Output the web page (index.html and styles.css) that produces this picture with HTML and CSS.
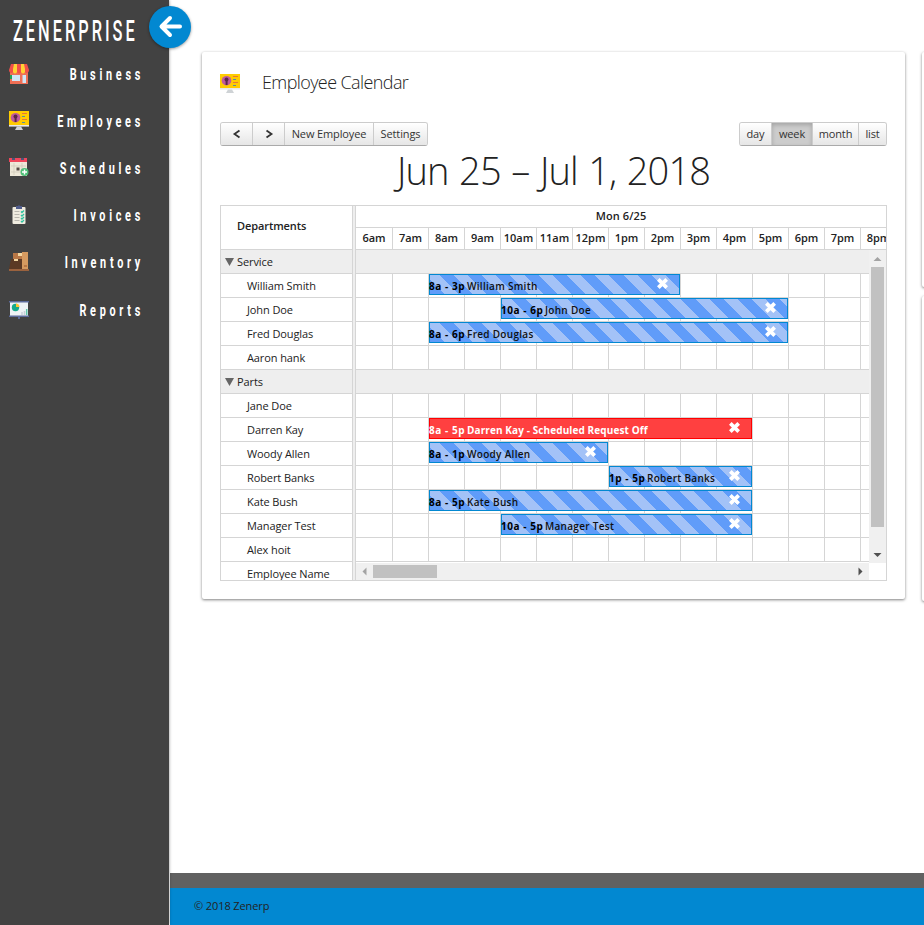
FILE: index.html
```html
<!DOCTYPE html>
<html lang="en">
<head>
<meta charset="utf-8">
<title>Zenerprise</title>
<link rel="stylesheet" href="styles.css">
</head>
<body>
<svg class="defs" width="0" height="0">
  <symbol id="board" viewBox="0 0 20 20">
    <path fill="#fc0" d="M0 0h20v14H0z"/><path fill="#e8e8e8" d="M0 14h20v1.600H0z"/>
    <path fill="#cfd3d6" d="M8 15.600h4l2 3.400H6z"/><circle cx="6.500" cy="6.700" r="4.800" fill="#bf5a9c"/>
    <circle cx="6.500" cy="5.600" r="2" fill="#5c2747"/><path fill="#5c2747" d="M5.600 7h2v4h-2z"/>
    <path stroke="#e8743b" d="M13 2.500h5M13 8.500h5"/><path stroke="#5a8f9b" d="M13 5.500h3M13 11.500h3"/>
  </symbol>
  <symbol id="close" viewBox="0 0 14 14"><path fill="none" stroke="#fff" stroke-width="4" d="M2.500 2.500l9 9M11.500 2.500l-9 9"/></symbol>
</svg>
<div class="app">
  <aside class="sidebar">
    <div class="brand"><span>ZENERPRISE</span></div>
    <nav>
      <a class="item"><svg viewBox="0 0 20 20"><path fill="#ef6f55" d="M1 6h18v14H1z"/><path fill="#f04f4a" d="M2 0h16l2 6c0 3-3 4-4 2-1 2-3 2-4 0-1 2-3 2-4 0-1 2-3 2-4 0-1 2-4 1-4-2z"/><path fill="#ffd034" d="M5 0h3v8c-1 2-3 2-4 0V5zM12 0h3l1 5v3c-1 2-3 2-4 0z"/><path fill="#cfe6f7" d="M3 11h8v6H3zM13.500 11h3.500v8h-3.500z"/><path fill="#23a35a" d="M1 11h2v4H1z"/></svg><span>Business</span></a>
      <a class="item"><svg viewBox="0 0 20 20"><use href="#board"/></svg><span>Employees</span></a>
      <a class="item"><svg viewBox="0 0 20 20"><path fill="#eee8d8" d="M1 4h17v14H1z"/><path fill="#f0465b" d="M0 0h18v4H0z"/><path fill="#4b5577" d="M3 0h3v2H3zM12 0h3v2h-3z"/><path stroke="#cdc7b8" stroke-width=".7" d="M2 8h15M2 14h15M5 5v12M13 5v12"/><path fill="#574b45" d="M7.500 9.500h3v3h-3z"/><circle cx="15.500" cy="14" r="4" fill="#4fbf78"/><path stroke="#fff" stroke-width="1.400" d="M13 14h5M15.500 11.500v5"/></svg><span>Schedules</span></a>
      <a class="item"><svg viewBox="0 0 20 20"><rect x="3.500" y="2" width="13" height="17" rx="1" fill="#efebdf"/><path fill="#515d8c" d="M7 1h2l1-1 1 1h2v3H7z"/><path stroke="#b8b5ad" d="M5.500 6.500h5M5.500 9.500h5M5.500 12.500h5M5.500 15.500h5"/><path fill="none" stroke="#2ec3a0" stroke-width="1.300" d="M12 6.500l1 1 2-2M12 10l1 1 2-2M12 13l1 1 2-2M12 16l1 1 2-2"/></svg><span>Invoices</span></a>
      <a class="item"><svg viewBox="0 0 20 20"><path fill="#b87746" d="M4 1h9v8H4z"/><path fill="#d59a60" d="M13 0h6v17h-6z"/><path fill="#5b3924" d="M2 7h11v10H0z"/><path fill="#f3d6a1" d="M9 1h4v3H9zM5 7h4v2H5z"/><path fill="#9a623e" d="M0 17h20v2H0z"/><path fill="#b87746" d="M15 13h3v2h-3z"/></svg><span>Inventory</span></a>
      <a class="item"><svg viewBox="0 0 20 20"><path fill="#eef2f5" d="M1 2h18v14H1z"/><path fill="#5d6b9b" d="M0 1h20v1.500H0zM0 15.500h20V17h-9v2H9v-2H0z"/><circle cx="6.500" cy="7.500" r="3.700" fill="#16aa8b"/><path fill="#ffc52f" d="M7 7V3.500A4 4 0 0 1 10.500 7z"/><path stroke="#c8cfd8" stroke-width="1.500" d="M13 15v-3M15.500 15v-4"/><path stroke="#5dc5a9" stroke-width="1.500" d="M17.700 15V9"/></svg><span>Reports</span></a>
    </nav>
  </aside>
  <button class="back" aria-label="Collapse"><svg viewBox="0 0 42 42"><path fill="none" stroke="#fff" stroke-width="4" stroke-linecap="round" stroke-linejoin="round" d="M31 20.500H13M21 12l-8.500 8.500L21 29"/></svg></button>
  <div class="page">
    <main>
      <section class="card">
        <header class="title"><svg viewBox="0 0 20 20"><use href="#board"/></svg><h2>Employee Calendar</h2></header>
        <div class="toolbar">
          <div class="group"><button class="arrow"><svg viewBox="0 0 10 10"><path d="M7.500 1.500L2.500 5l5 3.500"/></svg></button><button class="arrow"><svg viewBox="0 0 10 10"><path d="M2.500 1.500l5 3.500-5 3.500"/></svg></button><button class="b-new">New Employee</button><button class="b-set">Settings</button></div>
          <div class="group"><button class="b-day">day</button><button class="b-week active">week</button><button class="b-month">month</button><button class="b-list">list</button></div>
        </div>
        <h1><span>Jun 25 – Jul 1, 2018</span></h1>
        <div class="calendar">
          <div class="resources">
            <div class="dept">Departments</div>
            <div class="res head"><i></i>Service</div>
            <div class="res">William Smith</div><div class="res">John Doe</div><div class="res">Fred Douglas</div><div class="res">Aaron hank</div>
            <div class="res head"><i></i>Parts</div>
            <div class="res">Jane Doe</div><div class="res">Darren Kay</div><div class="res">Woody Allen</div><div class="res">Robert Banks</div><div class="res">Kate Bush</div><div class="res">Manager Test</div><div class="res">Alex hoit</div><div class="res">Employee Name</div>
          </div>
          <div class="divider"></div>
          <div class="timeline">
            <div class="date">Mon 6/25</div>
            <div class="hours"><span>6am</span><span>7am</span><span>8am</span><span>9am</span><span>10am</span><span>11am</span><span>12pm</span><span>1pm</span><span>2pm</span><span>3pm</span><span>4pm</span><span>5pm</span><span>6pm</span><span>7pm</span><span>8pm</span></div>
            <div class="scroller">
              <div class="rows">
                <div class="row head"></div>
                <div class="row"><div class="event s8 e3"><b>8a - 3p</b><span>William Smith</span><svg><use href="#close"/></svg></div></div>
                <div class="row"><div class="event s10 e6"><b>10a - 6p</b><span>John Doe</span><svg><use href="#close"/></svg></div></div>
                <div class="row"><div class="event s8 e6"><b>8a - 6p</b><span>Fred Douglas</span><svg><use href="#close"/></svg></div></div>
                <div class="row"></div>
                <div class="row head"></div>
                <div class="row"></div>
                <div class="row"><div class="event off s8 e5"><b>8a - 5p</b><span>Darren Kay - Scheduled Request Off</span><svg><use href="#close"/></svg></div></div>
                <div class="row"><div class="event s8 e1"><b>8a - 1p</b><span>Woody Allen</span><svg><use href="#close"/></svg></div></div>
                <div class="row"><div class="event s1 e5"><b>1p - 5p</b><span>Robert Banks</span><svg><use href="#close"/></svg></div></div>
                <div class="row"><div class="event s8 e5"><b>8a - 5p</b><span>Kate Bush</span><svg><use href="#close"/></svg></div></div>
                <div class="row"><div class="event s10 e5"><b>10a - 5p</b><span>Manager Test</span><svg><use href="#close"/></svg></div></div>
                <div class="row"></div>
              </div>
              <div class="vbar"><svg viewBox="0 0 17 17"><path fill="#a3a3a3" d="M4.500 11l4-4 4 4z"/></svg><div class="vthumb"></div><svg class="end" viewBox="0 0 17 17"><path fill="#505050" d="M4.500 7l4 4 4-4z"/></svg></div>
              <div class="hbar"><svg viewBox="0 0 17 17"><path fill="#a3a3a3" d="M10.500 4.500l-4 4 4 4z"/></svg><div class="hthumb"></div><svg class="end" viewBox="0 0 17 17"><path fill="#505050" d="M6.500 4.500l4 4-4 4z"/></svg></div>
            </div>
          </div>
        </div>
      </section>
      <div class="side-cards"><section></section><section></section></div>
    </main>
    <footer><div class="strip"></div><p>© 2018 Zenerp</p></footer>
  </div>
</div>
</body>
</html>
```

FILE: styles.css
```css
* { box-sizing: border-box; }
body { margin: 0; overflow: hidden; color: #222; background: #fff; font: 11px "Open Sans", "Noto Sans", sans-serif; }
h1, h2, p { margin: 0; font-weight: 300; }
svg { display: block; flex: none; }
button { font: inherit; color: #333; padding: 0; margin: 0; }
.defs { position: absolute; }
.app { position: relative; display: flex; width: 924px; height: 925px; overflow: hidden; }
.sidebar { flex: none; width: 169px; background: #424242; color: #fff; box-shadow: 0 0 3px rgba(0,0,0,.45); z-index: 1; }
.brand { height: 50px; padding: 12px 0 0 13px; font: 500 30px/38px "Roboto", sans-serif; }
.brand span { display: inline-block; letter-spacing: 5.500px; transform: scaleX(.545); transform-origin: 0 50%; }
nav { display: flex; flex-direction: column; }
.item { display: flex; align-items: center; height: 47.200px; padding: 0 25px 0 9px; font: bold 17px/24px "Roboto", sans-serif; }
.item svg { width: 20px; height: 20px; }
.item span { flex: 1; min-width: 0; display: flex; justify-content: flex-end; letter-spacing: 5.800px; transform: scaleX(.64); transform-origin: 100% 50%; }
.back { position: absolute; left: 149px; top: 6px; z-index: 2; width: 42px; height: 42px; border: 0; border-radius: 50%; background: #0288d1; box-shadow: 0 1px 3px rgba(0,0,0,.4); }
.page { flex: none; width: 755px; padding-left: 1px; display: flex; flex-direction: column; }
main { flex: 1; display: flex; gap: 17px; padding: 52px 0 0 32px; align-items: flex-start; }
.card { flex: none; width: 703px; height: 547px; padding: 20px 18px 0; background: #fff; border-radius: 2px; box-shadow: 0 1px 3px rgba(0,0,0,.5); }
.side-cards { flex: none; width: 400px; display: flex; flex-direction: column; gap: 9px; }
.side-cards section { height: 235px; border-radius: 2px; box-shadow: 0 1px 3px rgba(0,0,0,.5); }
.side-cards section + section { height: 305px; }
.title { display: flex; gap: 22px; height: 50px; }
.title svg { width: 20px; height: 20px; margin-top: 2px; }
.title h2 { font-size: 18px; line-height: 20px; letter-spacing: -.6px; }
.toolbar { display: flex; justify-content: space-between; letter-spacing: -.12px; }
.group { display: flex; height: 24px; border: 1px solid #ccc; border-bottom-color: #aaa; border-radius: 3px; overflow: hidden; }
.group button { display: flex; justify-content: center; align-items: center; padding-bottom: 1px; white-space: nowrap; letter-spacing: inherit; border: 0; border-left: 1px solid #ccc; background: linear-gradient(#fff, #e6e6e6); }
.group button:first-child { border-left: 0; }
.group .active { background: #ccc; box-shadow: inset 0 2px 4px rgba(0,0,0,.2); }
.arrow { width: 32px; }
.arrow:first-child { width: 31px; }
.arrow svg { width: 10px; height: 10px; fill: none; stroke: #333; stroke-width: 1.800; }
.b-new { width: 89px; } .b-set { width: 54px; }
.b-day { width: 31px; } .b-week { width: 41px; } .b-month { width: 46px; } .b-list { width: 28px; }
h1 { height: 59px; text-align: center; font-size: 38px; line-height: 48px; }
h1 span { display: inline-block; letter-spacing: -.9px; word-spacing: 1.600px; }
.calendar { display: flex; width: 667px; height: 376px; border: 1px solid #d5d5d5; overflow: hidden; }
.resources { flex: none; width: 131px; letter-spacing: -.1px; }
.dept { height: 44px; padding-left: 16px; line-height: 40px; font-weight: 600; border-bottom: 1px solid #d5d5d5; }
.res { height: 24px; padding-left: 26px; line-height: 24px; border-bottom: 1px solid #d5d5d5; white-space: nowrap; }
.res.head { display: flex; padding-left: 4px; background: #eee; }
.res i { width: 12px; height: 8px; margin-top: 8px; background: #666; clip-path: polygon(0 0, 9px 0, 4.500px 8px); }
.divider { flex: none; width: 4px; background: #eee; border: solid #d5d5d5; border-width: 0 1px; }
.timeline { flex: 1; min-width: 0; overflow: hidden; }
.date { height: 22px; border-bottom: 1px solid #d5d5d5; line-height: 20px; text-align: center; font-weight: 600; letter-spacing: .1px; }
.hours { display: grid; grid-template-columns: 37px repeat(14, 36px); height: 22px; border-bottom: 1px solid #d5d5d5; line-height: 20px; font-weight: 600; }
.hours span { text-align: center; border-right: 1px solid #d5d5d5; white-space: nowrap; }
.scroller { display: grid; grid-template-columns: 513px 17px; grid-template-rows: 313px 17px; }
.rows { overflow: hidden; }
.row { display: grid; grid-template-columns: 37px repeat(14, 36px); height: 24px; border-bottom: 1px solid #d5d5d5; background: repeating-linear-gradient(90deg, transparent 0 36px, #d5d5d5 36px 37px) 0 0 / 37px 100% no-repeat, repeating-linear-gradient(90deg, transparent 0 35px, #d5d5d5 35px 36px) 37px 0 no-repeat; }
.row.head { background: #eee; }
.event { position: relative; display: flex; align-items: center; height: 21px; margin-right: 1px; border: 1px solid #0288d1; background: repeating-linear-gradient(45deg, #609cf9 0 10px, #a3c2f7 10px 20px); color: #111; font-size: 10px; line-height: 19px; letter-spacing: .3px; white-space: nowrap; }
.event b, .event span { padding-top: 2px; line-height: 18px; }
.event b { width: 38px; margin-left: -1px; color: #000; font-weight: 700; letter-spacing: .55px; }
.event span { font-weight: 600; }
.event svg { position: absolute; right: 10px; top: 2px; width: 13px; height: 13px; }
.event.off { background: #ff4040; border-color: #f00; color: #fff; }
.event.off b { color: #fff; }
.event.off span { font-weight: 700; letter-spacing: .1px; }
.s8 { grid-column-start: 3; } .s10 { grid-column-start: 5; } .s1 { grid-column-start: 8; }
.event.s10 b { width: 44px; }
.e1 { grid-column-end: 8; } .e3 { grid-column-end: 10; } .e5 { grid-column-end: 12; } .e6 { grid-column-end: 13; }
.vbar { display: flex; flex-direction: column; background: #f0f0f0; }
.hbar { display: flex; background: #f0f0f0; }
.scroller > div > svg { width: 17px; height: 17px; }
.vthumb { width: 13px; height: 260px; margin-left: 2px; background: #c1c1c1; }
.vbar .end { margin-top: auto; }
.hthumb { width: 64px; height: 13px; margin-top: 2px; background: #c1c1c1; }
.hbar .end { margin-left: auto; }
footer { flex: none; height: 52px; background: #0288d1; }
.strip { height: 15px; background: #616161; }
footer p { padding-left: 24px; line-height: 36px; font-weight: 400; letter-spacing: -.1px; }
```
